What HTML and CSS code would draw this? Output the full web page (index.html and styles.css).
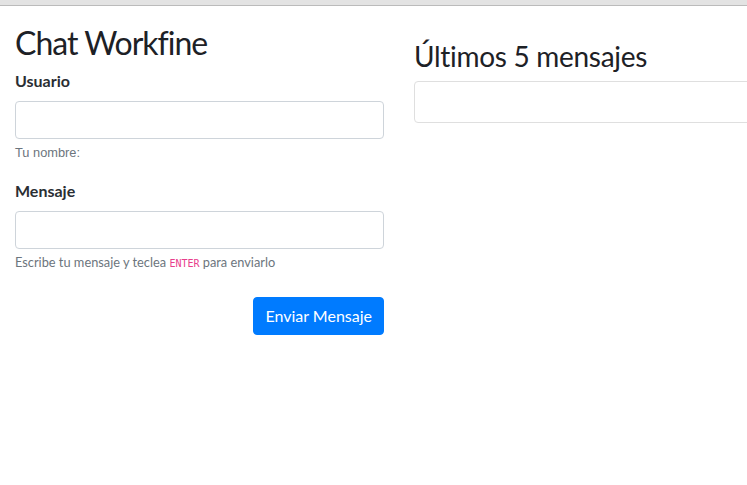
FILE: index.html
```html
<!DOCTYPE html>
<html lang="es">
<head>
<meta charset="utf-8">
<title>Chat Workfine</title>
<link rel="stylesheet" href="styles.css">
</head>
<body>
<div class="topbar"></div>
<div class="container">
  <div class="col">
    <h1 class="title">Chat Workfine</h1>
    <form class="form">
      <div class="form-group">
        <label class="label" for="usuario">Usuario</label>
        <input class="control" id="usuario" type="text">
        <small class="help help-arial">Tu nombre:</small>
      </div>
      <div class="form-group">
        <label class="label" for="mensaje">Mensaje</label>
        <input class="control" id="mensaje" type="text">
        <small class="help">Escribe tu mensaje y teclea <code class="kbd">ENTER</code> para enviarlo</small>
      </div>
      <div class="actions">
        <button class="btn" type="button">Enviar Mensaje</button>
      </div>
    </form>
  </div>
  <div class="col">
    <h2 class="subtitle">Últimos 5 mensajes</h2>
    <div class="card"></div>
  </div>
</div>
</body>
</html>
```

FILE: styles.css
```css
html, body {
  margin: 0;
  padding: 0;
  background: #fff;
  overflow: hidden;
}
body {
  font-family: "Lato", "Open Sans", sans-serif;
  color: #212529;
  font-size: 16px;
  line-height: 1.5;
}
.topbar {
  height: 5px;
  background: #e3e3e3;
  border-bottom: 1px solid #bbbbbb;
}
.container {
  display: grid;
  grid-template-columns: 369px 369px;
  column-gap: 30px;
  padding: 0 15px;
  width: 798px;
  box-sizing: border-box;
}
.title {
  font-size: 32px;
  font-weight: 400;
  line-height: 1.2;
  margin: 18px 0 7px;
  letter-spacing: -1px;
  color: #1d2126;
}
.form-group {
  display: flex;
  flex-direction: column;
  margin-bottom: 16px;
}
.label {
  font-weight: 700;
  font-size: 16px;
  line-height: 24px;
  margin-bottom: 8px;
  color: #2a2e33;
}
.control {
  height: 38px;
  box-sizing: border-box;
  border: 1px solid #ced4da;
  border-radius: 4px;
  padding: 6px 12px;
  font: inherit;
  margin: 0;
}
.help {
  margin-top: 4px;
  font-size: 12.8px;
  line-height: 19.2px;
  color: #6c757d;
}
.help-arial {
  font-family: "Liberation Sans", Arial, sans-serif;
}
.kbd {
  font-family: "DejaVu Sans Mono", monospace;
  font-size: 10px;
  color: #e83e8c;
}
.actions {
  display: flex;
  justify-content: flex-end;
  margin-top: 24px;
}
.btn {
  height: 38px;
  background: #007bff;
  color: #fff;
  border: 1px solid #007bff;
  border-radius: 4px;
  padding: 0 11px;
  font: inherit;
  font-size: 16px;
}
.subtitle {
  font-size: 28px;
  font-weight: 400;
  line-height: 1.2;
  margin: 34px 0 7px;
  letter-spacing: -0.3px;
  color: #1d2126;
}
.card {
  height: 42px;
  box-sizing: border-box;
  border: 1px solid #dfdfdf;
  border-radius: 4px;
}
```
